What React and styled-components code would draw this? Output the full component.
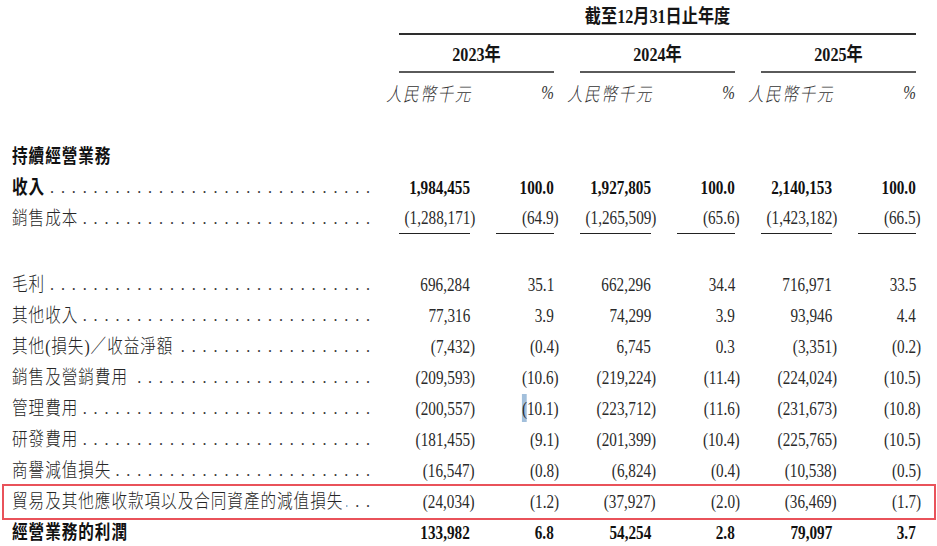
import React from 'react';
import styled, { createGlobalStyle, css } from 'styled-components';

const GlobalStyle = createGlobalStyle`
  html, body { margin: 0; padding: 0; background: #fff; }
  body {
    font-family: "Liberation Serif", "Noto Sans CJK TC", serif;
    color: #1a1a1a;
  }
`;

const COLS = '361px 71px 58px 71px 58px 71px 58px';

const Page = styled.div`
  width: 937px;
  height: 546px;
  overflow: hidden;
  box-sizing: border-box;
  padding-left: 12px;
  background: #fff;
`;

const Grid = styled.div`
  display: grid;
  grid-template-columns: ${COLS};
  column-gap: 26px;
`;

const HeadTitle = styled.div`
  grid-column: 2 / 8;
  height: 35px;
  box-sizing: border-box;
  border-bottom: 2px solid #2e2e2e;
  display: flex;
  align-items: center;
  justify-content: center;
`;

const YearCell = styled.div`
  grid-column: span 2;
  height: 38px;
  box-sizing: border-box;
  padding-top: 4px;
  border-bottom: 2px solid #5a5a5a;
  display: flex;
  align-items: center;
  justify-content: center;
`;

const HeadSpacer = styled.div`
  grid-column: 1;
`;

const HeadText = styled.span`
  display: inline-block;
  white-space: nowrap;
  font-size: 19px;
  line-height: 22px;
  font-weight: 700;
  color: #151515;
  transform: scaleX(0.85);
  transform-origin: center center;
`;

const UnitsRow = styled(Grid)`
  height: 40px;
  align-items: center;
`;

const UnitCell = styled.div`
  grid-column: ${p => p.$col};
  display: flex;
  justify-content: flex-end;
  align-items: center;
`;

const UnitText = styled.span`
  display: inline-block;
  white-space: nowrap;
  font-family: "Noto Sans CJK TC", "Liberation Serif", sans-serif;
  font-size: 19px;
  line-height: 24px;
  font-weight: 300;
  font-style: italic;
  letter-spacing: 2px;
  margin-right: -2px;
  color: #333;
  transform: scaleX(0.82);
  transform-origin: right center;
`;

const PctMark = styled.span`
  display: inline-block;
  font-size: 19px;
  line-height: 24px;
  font-style: italic;
  color: #333;
  transform: scaleX(0.8);
  transform-origin: right center;
`;

const Body = styled.div`
  margin-top: 28px;
`;

const Row = styled(Grid)`
  height: 31px;
  position: relative;
  ${p => p.$gapAfter && css`margin-bottom: 35px;`}
  ${p => p.$boxed && css`
    &::after {
      content: '';
      position: absolute;
      left: -10px;
      right: 1px;
      top: -2px;
      bottom: -3px;
      border: 2px solid #e9525a;
      pointer-events: none;
    }
  `}
`;

const LabelCell = styled.div`
  display: grid;
  grid-template-columns: minmax(0, 1fr);
  grid-template-areas: 'stack';
  align-items: center;
  height: 31px;
  min-width: 0;
`;

const Leader = styled.div`
  grid-area: stack;
  display: flex;
  justify-content: flex-end;
  overflow: hidden;
  margin-right: -4px;
  min-width: 0;
`;

const Dots = styled.span`
  flex-shrink: 0;
  white-space: nowrap;
  font-family: "Liberation Serif", serif;
  font-size: 16px;
  letter-spacing: 6.9px;
  color: #333;
`;

const LabelText = styled.span`
  grid-area: stack;
  justify-self: start;
  display: inline-block;
  white-space: nowrap;
  font-family: "Liberation Serif", "Noto Sans CJK TC", serif;
  font-size: 19px;
  line-height: 24px;
  letter-spacing: 1.2px;
  font-weight: ${p => (p.$bold ? 700 : 300)};
  color: ${p => (p.$bold ? '#111' : '#262626')};
  background: #fff;
  padding-right: 4px;
  transform: scaleX(0.82);
  transform-origin: left center;
`;

const ValueCell = styled.div`
  height: 31px;
  box-sizing: border-box;
  display: flex;
  justify-content: flex-end;
  align-items: center;
  ${p => p.$under && css`border-bottom: 1px solid #222;`}
`;

const NumText = styled.span`
  display: inline-block;
  white-space: nowrap;
  font-family: "Liberation Serif", serif;
  font-size: 19px;
  line-height: 22px;
  font-weight: ${p => (p.$bold ? 700 : 400)};
  color: ${p => (p.$bold ? '#111' : '#2a2a2a')};
  transform: scaleX(0.8);
  transform-origin: right center;
`;

const Hang = styled.span`
  margin-right: -0.333em;
`;

const Sel = styled.span`
  background: #a2bfdb;
  padding: 4px 0 3px;
`;

function Value({ text, bold, under, sel }) {
  const neg = text.startsWith('(');
  const core = neg ? text.slice(1, -1) : text;
  return (
    <ValueCell $under={under}>
      <NumText $bold={bold}>
        {neg && (sel ? <Sel>(</Sel> : '(')}
        {core}
        {neg && <Hang>)</Hang>}
      </NumText>
    </ValueCell>
  );
}

const DOTS = '.'.repeat(40);

function Line({ label, vals = [], bold, dots = true, under, boxed, gapAfter, selIndex }) {
  return (
    <Row $boxed={boxed} $gapAfter={gapAfter}>
      <LabelCell>
        {dots && (
          <Leader>
            <Dots>{DOTS}</Dots>
          </Leader>
        )}
        <LabelText $bold={bold}>{label}</LabelText>
      </LabelCell>
      {vals.map((v, i) => (
        <Value key={i} text={v} bold={bold} under={under} sel={selIndex === i} />
      ))}
    </Row>
  );
}

const first = [
  { label: '持續經營業務', bold: true, dots: false },
  { label: '收入', bold: true, vals: ['1,984,455', '100.0', '1,927,805', '100.0', '2,140,153', '100.0'] },
  { label: '銷售成本', under: true, gapAfter: true, vals: ['(1,288,171)', '(64.9)', '(1,265,509)', '(65.6)', '(1,423,182)', '(66.5)'] },
];

const second = [
  { label: '毛利', vals: ['696,284', '35.1', '662,296', '34.4', '716,971', '33.5'] },
  { label: '其他收入', vals: ['77,316', '3.9', '74,299', '3.9', '93,946', '4.4'] },
  { label: '其他(損失)／收益淨額', vals: ['(7,432)', '(0.4)', '6,745', '0.3', '(3,351)', '(0.2)'] },
  { label: '銷售及營銷費用', vals: ['(209,593)', '(10.6)', '(219,224)', '(11.4)', '(224,024)', '(10.5)'] },
  { label: '管理費用', selIndex: 1, vals: ['(200,557)', '(10.1)', '(223,712)', '(11.6)', '(231,673)', '(10.8)'] },
  { label: '研發費用', vals: ['(181,455)', '(9.1)', '(201,399)', '(10.4)', '(225,765)', '(10.5)'] },
  { label: '商譽減值損失', vals: ['(16,547)', '(0.8)', '(6,824)', '(0.4)', '(10,538)', '(0.5)'] },
  { label: '貿易及其他應收款項以及合同資產的減值損失', boxed: true, vals: ['(24,034)', '(1.2)', '(37,927)', '(2.0)', '(36,469)', '(1.7)'] },
  { label: '經營業務的利潤', bold: true, dots: false, vals: ['133,982', '6.8', '54,254', '2.8', '79,097', '3.7'] },
];

export default function App() {
  return (
    <>
      <GlobalStyle />
      <Page>
        <Grid>
          <HeadTitle>
            <HeadText>截至12月31日止年度</HeadText>
          </HeadTitle>
          <HeadSpacer />
          {['2023年', '2024年', '2025年'].map(y => (
            <YearCell key={y}>
              <HeadText>{y}</HeadText>
            </YearCell>
          ))}
        </Grid>
        <UnitsRow>
          {[2, 4, 6].map(c => (
            <React.Fragment key={c}>
              <UnitCell $col={c}>
                <UnitText>人民幣千元</UnitText>
              </UnitCell>
              <UnitCell $col={c + 1}>
                <PctMark>%</PctMark>
              </UnitCell>
            </React.Fragment>
          ))}
        </UnitsRow>
        <Body>
          {first.map(r => (
            <Line key={r.label} {...r} />
          ))}
          {second.map(r => (
            <Line key={r.label} {...r} />
          ))}
        </Body>
      </Page>
    </>
  );
}
